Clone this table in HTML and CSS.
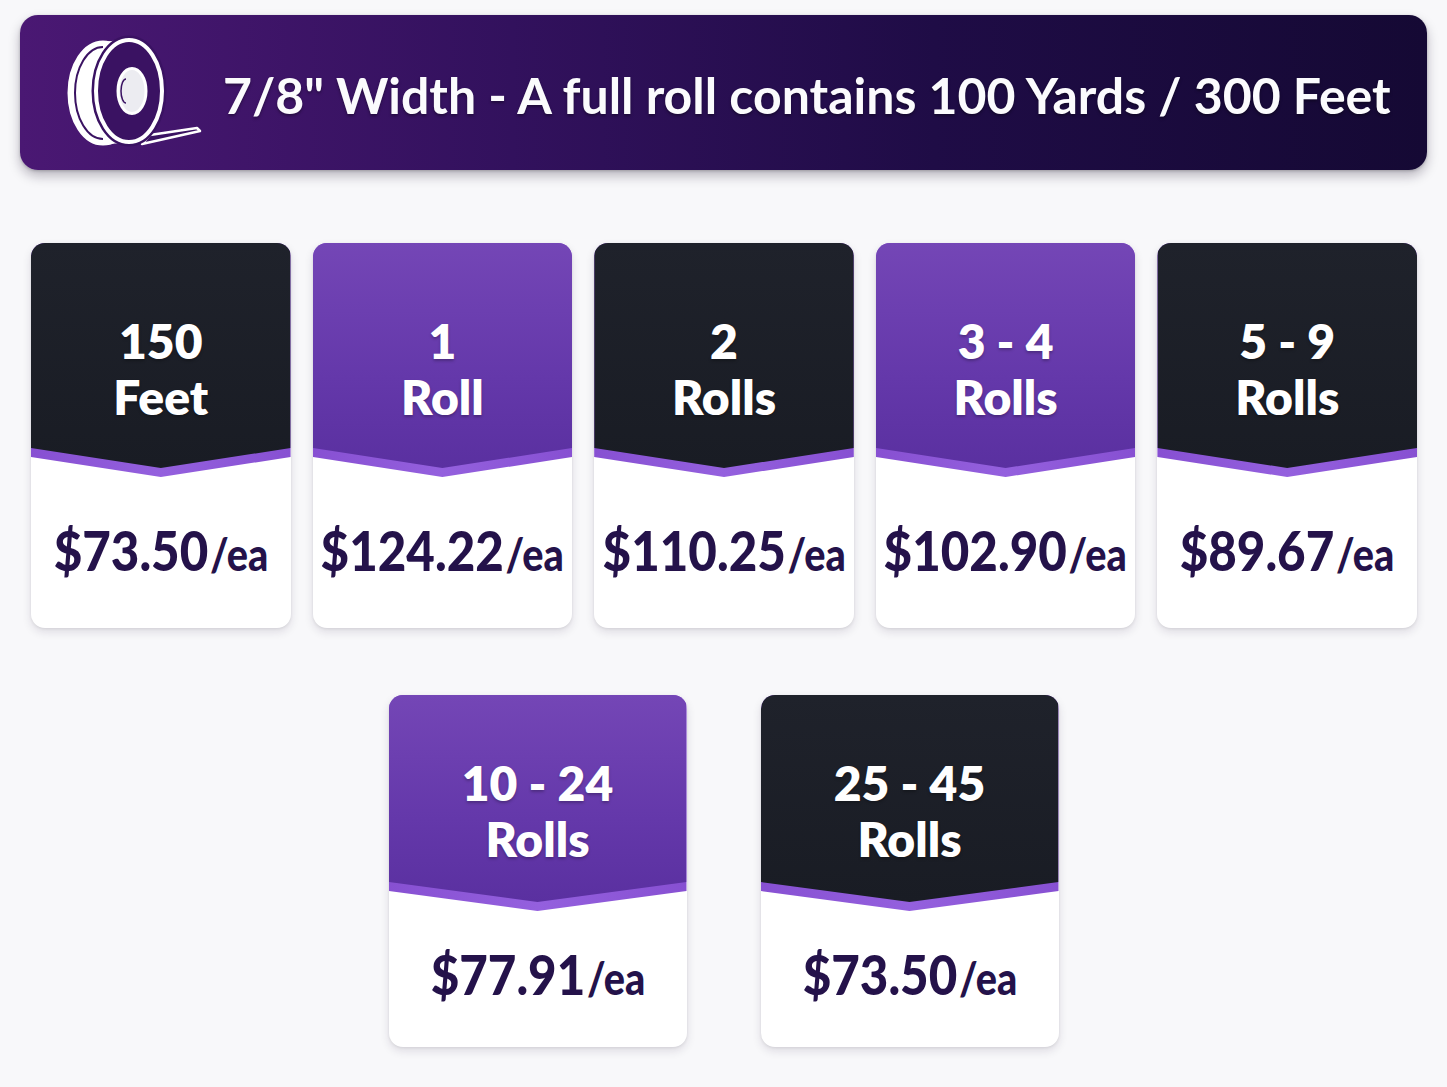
FILE: index.html
```html
<!DOCTYPE html>
<html lang="en">
<head>
<meta charset="utf-8">
<title>Tape pricing</title>
<link rel="stylesheet" href="styles.css">
</head>
<body>
<div class="page">
  <header class="banner">
    <svg class="roll-icon" viewBox="60 32 145 120" width="145" height="120" aria-hidden="true">
      <ellipse cx="103" cy="92" rx="34" ry="51" fill="#fff" stroke="#fff" stroke-width="3"/>
      <path d="M103 41 L129 38 L129 142 L103 143 Z" fill="#fff"/>
      <path d="M103 46 A28 46 0 0 0 103 138" fill="none" stroke="#3a1262" stroke-width="2"/>
      <polygon points="150,134 197,127 200,130 142,143" fill="#3a1262" stroke="#fff" stroke-width="2.5" stroke-linejoin="round"/>
      <ellipse cx="129" cy="90" rx="33" ry="51" fill="#3a1262" stroke="#3a1262" stroke-width="9"/>
      <ellipse cx="129" cy="90" rx="33" ry="51" fill="#3a1262" stroke="#fff" stroke-width="4"/>
      <ellipse cx="132" cy="90" rx="14" ry="22.5" fill="#ececf1" stroke="#fff" stroke-width="3"/>
      <path d="M126 78 A5 12 0 0 0 126 102" fill="none" stroke="#3a1262" stroke-width="1.5"/>
    </svg>
    <h1 class="banner-title">7/8" Width - A full roll contains 100 Yards / 300 Feet</h1>
  </header>

  <section class="tiers tiers-main">
    <article class="tier tier-dark">
      <div class="tier-top"><div class="tier-head"><span class="qty">150</span><span class="unit">Feet</span></div></div>
      <div class="tier-price"><span class="price"><span class="amount">$73.50</span><span class="per">/ea</span></span></div>
    </article>
    <article class="tier tier-purple">
      <div class="tier-top"><div class="tier-head"><span class="qty">1</span><span class="unit">Roll</span></div></div>
      <div class="tier-price"><span class="price"><span class="amount">$124.22</span><span class="per">/ea</span></span></div>
    </article>
    <article class="tier tier-dark">
      <div class="tier-top"><div class="tier-head"><span class="qty">2</span><span class="unit">Rolls</span></div></div>
      <div class="tier-price"><span class="price"><span class="amount">$110.25</span><span class="per">/ea</span></span></div>
    </article>
    <article class="tier tier-purple">
      <div class="tier-top"><div class="tier-head"><span class="qty">3 - 4</span><span class="unit">Rolls</span></div></div>
      <div class="tier-price"><span class="price"><span class="amount">$102.90</span><span class="per">/ea</span></span></div>
    </article>
    <article class="tier tier-dark">
      <div class="tier-top"><div class="tier-head"><span class="qty">5 - 9</span><span class="unit">Rolls</span></div></div>
      <div class="tier-price"><span class="price"><span class="amount">$89.67</span><span class="per">/ea</span></span></div>
    </article>
  </section>

  <section class="tiers tiers-bulk">
    <article class="tier tier-purple">
      <div class="tier-top"><div class="tier-head"><span class="qty">10 - 24</span><span class="unit">Rolls</span></div></div>
      <div class="tier-price"><span class="price"><span class="amount">$77.91</span><span class="per">/ea</span></span></div>
    </article>
    <article class="tier tier-dark">
      <div class="tier-top"><div class="tier-head"><span class="qty">25 - 45</span><span class="unit">Rolls</span></div></div>
      <div class="tier-price"><span class="price"><span class="amount">$73.50</span><span class="per">/ea</span></span></div>
    </article>
  </section>
</div>
</body>
</html>
```

FILE: styles.css
```css
* { box-sizing: border-box; }

html, body {
  margin: 0;
  padding: 0;
  background: #f8f8fa;
}

body {
  font-family: Lato, "Open Sans", "Liberation Sans", sans-serif;
  font-weight: 700;
  color: #24124a;
}

.page {
  width: 1447px;
  height: 1087px;
  padding: 15px 20px 0 20px;
  overflow: hidden;
}

/* Banner */
.banner {
  height: 155px;
  border-radius: 18px;
  background: linear-gradient(90deg, #4a1873 0%, #32115d 35%, #1f0c46 65%, #150934 100%);
  box-shadow: 0 6px 12px rgba(20, 10, 40, 0.28), 0 1px 3px rgba(0, 0, 0, 0.2);
  display: flex;
  align-items: center;
  padding-left: 40px;
  gap: 18px;
}

.roll-icon {
  flex: none;
  display: block;
}

.banner-title {
  margin: 0;
  padding-top: 5px;
  font-size: 50px;
  line-height: 1;
  font-weight: 700;
  color: #fbfbfd;
  white-space: nowrap;
  text-shadow: 0 2px 3px rgba(0, 0, 0, 0.35);
}

/* Tier rows */
.tiers-main {
  display: grid;
  grid-template-columns: repeat(5, 1fr);
  gap: 22px;
  margin-top: 73px;
  padding: 0 10px 0 11px;
}

.tiers-bulk {
  display: flex;
  justify-content: center;
  gap: 74px;
  margin-top: 67px;
}

.tiers-bulk .tier {
  width: 298px;
}

.tier {
  background: #fff;
  border-radius: 14px;
  overflow: hidden;
  box-shadow: 0 4px 10px rgba(30, 20, 60, 0.12), 0 1px 3px rgba(0, 0, 0, 0.08);
  display: flex;
  flex-direction: column;
}

.tier-top {
  background: linear-gradient(90deg, #8750d2, #9460de 50%, #8750d2);
  padding-bottom: 9px;
  clip-path: polygon(0 0, 100% 0, 100% calc(100% - 20px), 50% 100%, 0 calc(100% - 20px));
}

.tier-head {
  clip-path: polygon(0 0, 100% 0, 100% calc(100% - 20px), 50% 100%, 0 calc(100% - 20px));
  display: flex;
  flex-direction: column;
  align-items: center;
  color: #fff;
  font-size: 48px;
  font-weight: 800;
  line-height: 56px;
  text-shadow: 0 2px 3px rgba(0, 0, 0, 0.25);
}

.tiers-main .tier-head {
  height: 225px;
  padding-top: 70px;
}

.tiers-bulk .tier-head {
  height: 207px;
  padding-top: 60px;
}

.tier-dark .tier-head {
  background: linear-gradient(180deg, #1f222b 0%, #191c24 100%);
}

.tier-purple .tier-head {
  background: linear-gradient(180deg, #7446b6 0%, #6438aa 60%, #5a30a0 100%);
}

.tier-price {
  display: flex;
  align-items: center;
  justify-content: center;
}

.tiers-main .tier-price {
  height: 151px;
  padding-top: 10px;
}

.tiers-bulk .tier-price {
  height: 136px;
  padding-top: 4px;
}

.price {
  display: inline-block;
  white-space: nowrap;
  line-height: 56px;
  transform: scaleX(0.88);
  color: #24124a;
  font-weight: 900;
}

.amount {
  font-size: 56px;
}

.per {
  font-size: 45px;
  margin-left: 2px;
}
```
